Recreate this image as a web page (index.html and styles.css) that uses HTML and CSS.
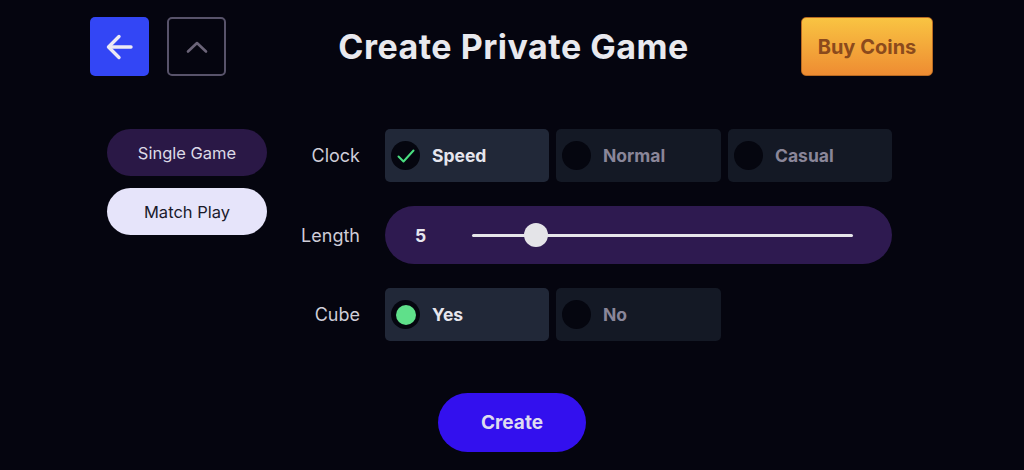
FILE: index.html
```html
<html>
	<head>
		<meta charset="utf-8">
		<meta name="viewport" content="width=device-width, initial-scale=1.0">
		<title>Create Private Game</title>
		<link rel="stylesheet" href="styles.css">
	</head>
	<body>
		<div id="container">
			<div class="header">
				<div class="navbtns">
					<div class="backbtn">
						<svg width="28" height="28" viewBox="0 0 28 28" fill="none" stroke="#eceaf4" stroke-width="3.4" stroke-linecap="round" stroke-linejoin="round">
							<path d="M25 14H3.5"/>
							<path d="M13 3.5L2.5 14L13 24.5"/>
						</svg>
					</div>
					<div class="upbtn">
						<svg width="22" height="14" viewBox="0 0 22 14" fill="none" stroke="#6b6478" stroke-width="2.6" stroke-linecap="round" stroke-linejoin="round">
							<path d="M2 11.5L11 3L20 11.5"/>
						</svg>
					</div>
				</div>
				<h1 class="title">Create Private Game</h1>
				<div class="coins">Buy Coins</div>
			</div>

			<div class="main">
				<div class="modes">
					<div class="mode">Single Game</div>
					<div class="mode active">Match Play</div>
				</div>

				<div class="form">
					<div class="label">Clock</div>
					<div class="options">
						<div class="opt selected">
							<span class="dot">
								<svg width="18" height="14" viewBox="0 0 18 14" fill="none" stroke="#4ade80" stroke-width="2" stroke-linecap="round" stroke-linejoin="round">
									<path d="M1.5 7.5L6.5 12.5L16.5 1.5"/>
								</svg>
							</span>
							Speed
						</div>
						<div class="opt"><span class="dot"></span>Normal</div>
						<div class="opt"><span class="dot"></span>Casual</div>
					</div>

					<div class="label">Length</div>
					<div class="slider">
						<span class="value">5</span>
						<div class="track">
							<div class="thumb"></div>
						</div>
					</div>

					<div class="label">Cube</div>
					<div class="options">
						<div class="opt selected"><span class="dot"><span class="green"></span></span>Yes</div>
						<div class="opt"><span class="dot"></span>No</div>
					</div>
				</div>
			</div>

			<div class="footer">
				<div class="create">Create</div>
			</div>
		</div>
	</body>
</html>
```

FILE: styles.css
```css
html {
	height: 100%;
	width: 100%;
	margin: 0;
	padding: 0;
}
body {
	height: 100%;
	width: 100%;
	overflow: hidden;
	margin: 0;
	padding: 0;
	background-color: #05050f;
	font-family: Inter, "Noto Sans", sans-serif;
	color: #e6e6ee;
}
#container {
	width: 100%;
	height: 100%;
	-webkit-user-select: none;
	user-select: none;
}

/* ---------- header ---------- */
.header {
	display: flex;
	align-items: center;
	justify-content: space-between;
	padding: 17px 91px 0 90px;
}
.navbtns {
	display: flex;
	gap: 18px;
}
.backbtn {
	width: 59px;
	height: 59px;
	border-radius: 5px;
	background-color: #3346f5;
	display: flex;
	align-items: center;
	justify-content: center;
}
.upbtn {
	width: 55px;
	height: 55px;
	border: 2px solid #58536a;
	border-radius: 5px;
	display: flex;
	align-items: center;
	justify-content: center;
}
.title {
	margin: 0;
	font-size: 34px;
	font-weight: 700;
	color: #e9e9ee;
	letter-spacing: 0.5px;
}
.coins {
	width: 130px;
	height: 57px;
	border: 1px solid #b86a22;
	border-radius: 5px;
	background: linear-gradient(#f9c442, #ee8c32);
	color: #8b4a1c;
	font-size: 20px;
	font-weight: 700;
	display: flex;
	align-items: center;
	justify-content: center;
}

/* ---------- main ---------- */
.main {
	display: flex;
	align-items: flex-start;
	padding: 53px 0 0 107px;
}
.modes {
	display: flex;
	flex-direction: column;
	gap: 12px;
	width: 160px;
}
.mode {
	height: 47px;
	border-radius: 24px;
	background-color: #2a1846;
	color: #dcdae6;
	font-size: 16.5px;
	display: flex;
	align-items: center;
	justify-content: center;
}
.mode.active {
	background-color: #e6e4fa;
	color: #1a1a2a;
}

.form {
	display: grid;
	grid-template-columns: 93px auto;
	grid-template-rows: 53px 58px 53px;
	column-gap: 25px;
	row-gap: 24px;
	align-items: center;
}
.label {
	text-align: right;
	font-size: 18px;
	color: #cfcdd8;
}
.options {
	display: grid;
	grid-template-columns: 164px 165px 164px;
	gap: 7px;
	height: 100%;
}
.opt {
	display: flex;
	align-items: center;
	gap: 12px;
	padding-left: 6px;
	border-radius: 5px;
	background-color: #141925;
	color: #8a8699;
	font-size: 17.5px;
	font-weight: 700;
}
.opt.selected {
	background-color: #212838;
	color: #e6e6ee;
}
.dot {
	width: 29px;
	height: 29px;
	border-radius: 50%;
	background-color: #05060f;
	display: flex;
	align-items: center;
	justify-content: center;
}
.green {
	width: 20px;
	height: 20px;
	border-radius: 50%;
	background-color: #5fe08a;
}

.slider {
	width: 507px;
	height: 58px;
	border-radius: 29px;
	background-color: #2e1a50;
	display: flex;
	align-items: center;
	box-sizing: border-box;
	padding: 0 39px 0 30px;
}
.value {
	width: 57px;
	font-size: 17.5px;
	font-weight: 700;
	color: #e6e6ee;
}
.track {
	flex: 1;
	height: 3px;
	border-radius: 2px;
	background-color: #e6e6ea;
	position: relative;
}
.thumb {
	position: absolute;
	left: 52px;
	top: -11px;
	width: 24px;
	height: 24px;
	border-radius: 50%;
	background-color: #e4e4e8;
}

/* ---------- footer ---------- */
.footer {
	display: flex;
	justify-content: center;
	padding-top: 52px;
}
.create {
	width: 148px;
	height: 59px;
	border-radius: 30px;
	background-color: #3310ee;
	color: #dedcf0;
	font-size: 19px;
	font-weight: 700;
	display: flex;
	align-items: center;
	justify-content: center;
}
```
